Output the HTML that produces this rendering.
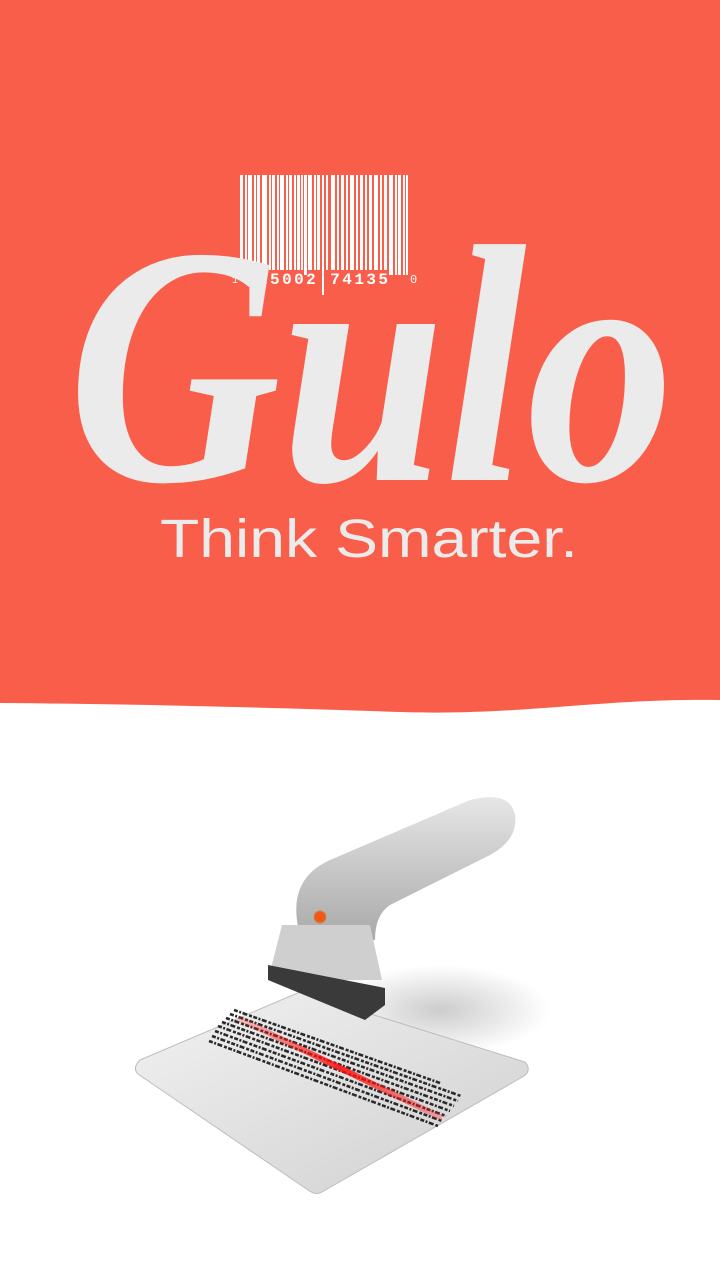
<!DOCTYPE html>
<html><head><meta charset="utf-8"><style>
html,body{margin:0;padding:0;width:720px;height:1280px;overflow:hidden;background:#fff;font-family:"Liberation Sans",sans-serif}
</style></head><body>
<svg width="720" height="1280" viewBox="0 0 720 1280" style="position:absolute;left:0;top:0">
<defs>
<linearGradient id="card" x1="0" y1="0" x2="1" y2="1"><stop offset="0" stop-color="#f2f2f2"/><stop offset="1" stop-color="#cfcfcf"/></linearGradient>
<linearGradient id="hand" x1="0" y1="0" x2="0" y2="1"><stop offset="0" stop-color="#e6e6e6"/><stop offset="1" stop-color="#a9a9a9"/></linearGradient>
<radialGradient id="sh" cx="0.5" cy="0.5" r="0.5"><stop offset="0" stop-color="#000" stop-opacity="0.2"/><stop offset="1" stop-color="#000" stop-opacity="0"/></radialGradient>
<linearGradient id="laser" x1="0" y1="0" x2="1" y2="0"><stop offset="0" stop-color="#ff2020" stop-opacity="0.2"/><stop offset="0.5" stop-color="#ff1010" stop-opacity="0.9"/><stop offset="1" stop-color="#ff2020" stop-opacity="0.3"/></linearGradient>
</defs>
<path d="M0 0H720V700C600 698 520 716 400 712C280 708 150 704 0 703Z" fill="#f95e4b"/>
<g fill="#fff">
<rect x="240" y="175" width="3" height="100"/><rect x="245" y="175" width="2" height="100"/><rect x="248" y="175" width="4" height="95"/><rect x="254" y="175" width="2" height="95"/><rect x="257" y="175" width="3" height="95"/><rect x="262" y="175" width="5" height="95"/><rect x="269" y="175" width="2" height="95"/><rect x="272" y="175" width="3" height="95"/><rect x="277" y="175" width="2" height="95"/><rect x="280" y="175" width="4" height="95"/><rect x="286" y="175" width="2" height="95"/><rect x="289" y="175" width="3" height="95"/><rect x="294" y="175" width="2" height="95"/><rect x="297" y="175" width="3" height="95"/><rect x="301" y="175" width="2" height="95"/><rect x="304" y="175" width="3" height="100"/><rect x="308" y="175" width="4" height="95"/><rect x="314" y="175" width="2" height="95"/><rect x="317" y="175" width="3" height="95"/><rect x="322" y="175" width="2" height="120"/><rect x="326" y="175" width="2" height="95"/><rect x="331" y="175" width="4" height="95"/><rect x="337" y="175" width="2" height="95"/><rect x="341" y="175" width="3" height="95"/><rect x="346" y="175" width="2" height="95"/><rect x="350" y="175" width="4" height="95"/><rect x="356" y="175" width="2" height="95"/><rect x="360" y="175" width="3" height="95"/><rect x="365" y="175" width="2" height="95"/><rect x="369" y="175" width="3" height="95"/><rect x="374" y="175" width="4" height="95"/><rect x="380" y="175" width="2" height="95"/><rect x="384" y="175" width="3" height="95"/><rect x="389" y="175" width="4" height="100"/><rect x="395" y="175" width="2" height="100"/><rect x="398" y="175" width="3" height="100"/><rect x="403" y="175" width="2" height="100"/><rect x="406" y="175" width="2" height="100"/>
</g>
<text x="232" y="283" fill="#fff" font-size="10" font-family="Liberation Mono,monospace">1</text>
<text x="258" y="284" fill="#fff" font-size="16" font-weight="bold" font-family="Liberation Mono,monospace" textLength="130">25002 74135</text>
<text x="410" y="283" fill="#fff" font-size="12" font-family="Liberation Mono,monospace">0</text>
<text x="68" y="480" fill="#ebebeb" font-size="340" font-weight="bold" font-style="italic" font-family="Liberation Serif,serif" textLength="606" lengthAdjust="spacingAndGlyphs">Gulo</text>
<text x="160" y="557" fill="#ebebeb" font-size="54" font-family="Liberation Sans,sans-serif" textLength="418" lengthAdjust="spacingAndGlyphs">Think Smarter.</text>
<ellipse cx="440" cy="1010" rx="110" ry="45" fill="url(#sh)"/>
<path d="M140 1060L300 992L525 1062Q532 1070 524 1076L322 1192Q316 1196 308 1190L138 1074Q132 1068 140 1060Z" fill="url(#card)" stroke="#bdbdbd"/>
<g stroke="#2a2a2a" stroke-width="2.6" stroke-dasharray="4 1.5 2 1.5 5 2 3 1.5">
<line x1="209" y1="1041" x2="438" y2="1126"/><line x1="212" y1="1036" x2="442" y2="1121"/><line x1="215" y1="1031" x2="446" y2="1116"/><line x1="218" y1="1026" x2="450" y2="1111"/><line x1="222" y1="1022" x2="454" y2="1106"/><line x1="226" y1="1018" x2="458" y2="1101"/><line x1="230" y1="1014" x2="461" y2="1096"/><line x1="234" y1="1010" x2="440" y2="1083"/>
</g>
<path d="M238 1018L442 1118" stroke="url(#laser)" stroke-width="6"/>
<path d="M300 935Q285 880 330 860L470 800Q510 790 515 815Q518 840 490 855L390 905Q375 915 375 940Z" fill="url(#hand)"/>
<path d="M282 925L370 925L382 980L268 980Z" fill="#cfcfcf"/>
<path d="M268 965L385 988L385 1005L365 1020L268 980Z" fill="#3a3a3a"/>
<circle cx="320" cy="917" r="6" fill="#f0581a" stroke="#c84" />
</svg>
</body></html>
